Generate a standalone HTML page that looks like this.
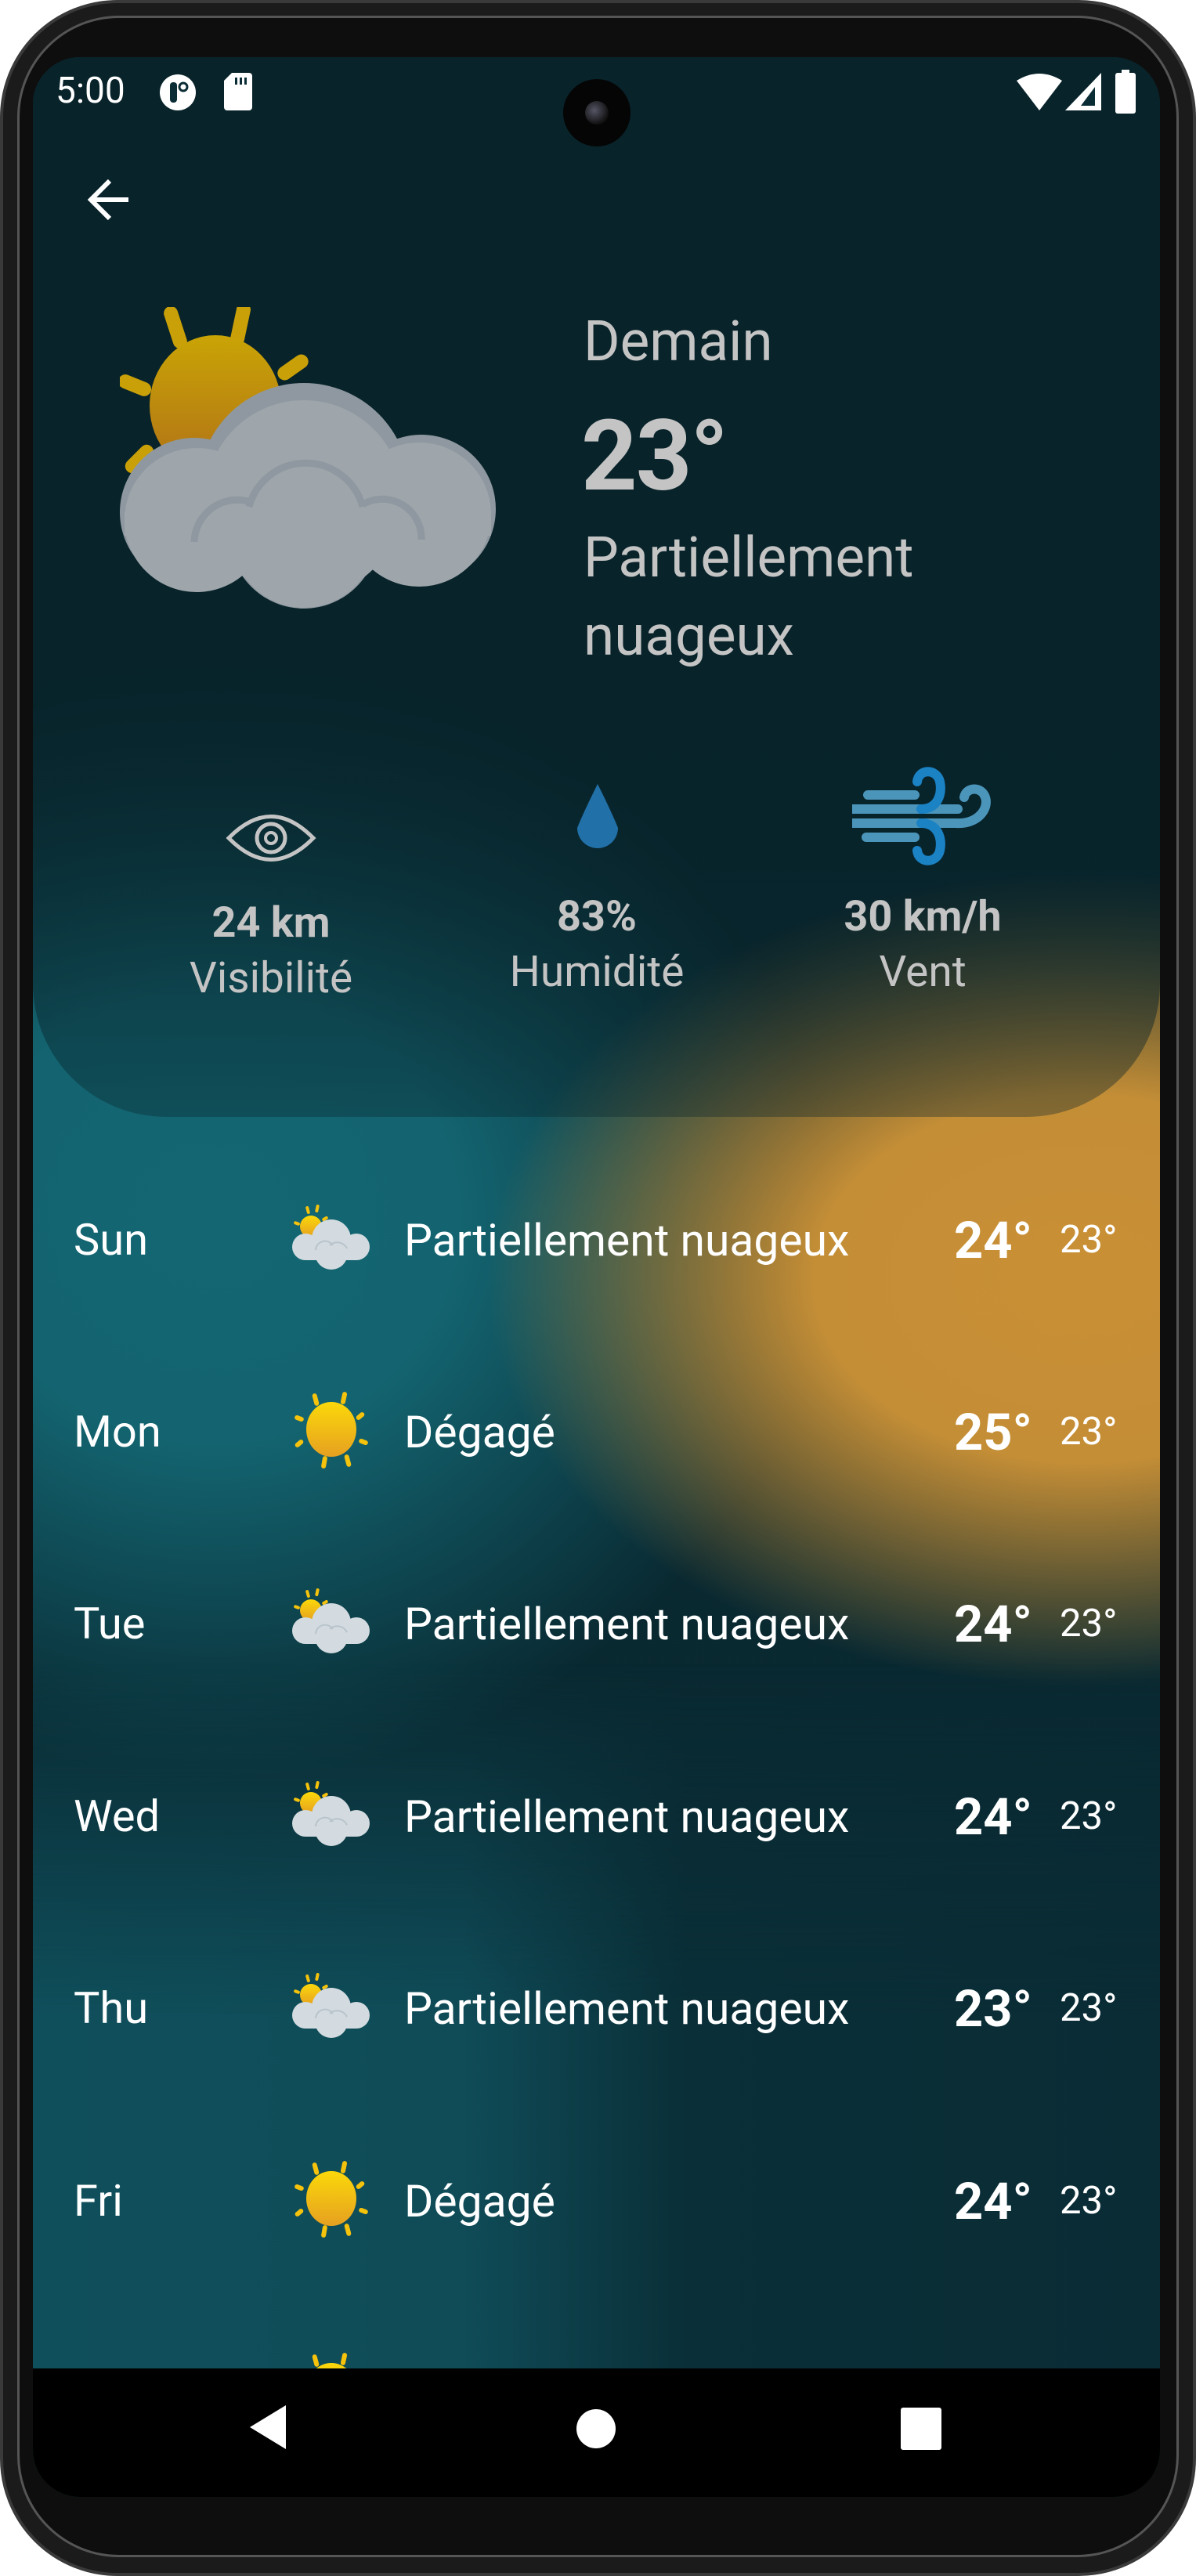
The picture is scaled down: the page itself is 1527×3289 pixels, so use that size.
<!DOCTYPE html>
<html><head><meta charset="utf-8"><style>
*{margin:0;padding:0;box-sizing:border-box}
body{width:1527px;height:3289px;background:#fff;position:relative;overflow:hidden;font-family:"Roboto","Liberation Sans",sans-serif}
.frame{position:absolute;left:0;top:0;width:1527px;height:3289px;border-radius:150px;background:#1b1b1b;border:4px solid #3a3a3a}
.bezel{position:absolute;left:22px;top:20px;width:1483px;height:3245px;border-radius:130px;background:#0e0e0e;border:3px solid #555}
.screen{position:absolute;left:42px;top:73px;width:1439px;height:3115px;border-radius:60px;overflow:hidden;background:#0a2c35}
.bg{position:absolute;inset:0;background:
radial-gradient(ellipse 760px 520px at 1340px 1560px,#c98f35 0%,#c48e36 45%,rgba(196,142,54,.55) 70%,rgba(196,142,54,0) 100%),
radial-gradient(ellipse 780px 720px at 230px 1480px,#136672 0%,#136470 40%,rgba(19,100,112,0) 100%),
linear-gradient(#08232a,#0a2c35)}
.low{position:absolute;left:0;top:2050px;width:1439px;height:1000px;background:linear-gradient(to right,#0f4f5b 0%,#0f4c58 38%,#0a2f38 58%,#0a2c35 100%);-webkit-mask-image:linear-gradient(to bottom,transparent 0,#000 450px);mask-image:linear-gradient(to bottom,transparent 0,#000 450px)}
.card{position:absolute;left:0;top:0;width:1439px;height:1353px;border-radius:0 0 170px 170px;background:linear-gradient(to bottom,#08232a 0%,#08232a 50%,rgba(8,35,42,.75) 70%,rgba(8,35,42,.35) 100%)}
.nav{position:absolute;left:0;top:2951px;width:1439px;height:164px;background:#000}
.t{position:absolute;white-space:nowrap}
.g{color:#c4c4c4}
.w{color:#fff}
.row{position:absolute;left:0;width:1439px;height:120px}
.row .d{position:absolute;left:52px;top:26px;font-size:56px;color:#fff}
.row .ds{position:absolute;left:474px;top:26px;font-size:57px;color:#fff}
.row .hi{position:absolute;left:1176px;top:22px;font-size:65px;font-weight:bold;color:#fff}
.row .lo{position:absolute;left:1311px;top:30px;font-size:49px;color:#fff}
.row svg{position:absolute;left:326px;top:6px}
</style></head><body>
<svg width="0" height="0" style="position:absolute">
<defs>
<linearGradient id="sg" x1="0" y1="0" x2="0" y2="1"><stop offset="0" stop-color="#fbd80a"/><stop offset="1" stop-color="#e6a020"/></linearGradient>
<linearGradient id="bsg" x1="0" y1="0" x2="0" y2="1"><stop offset="0" stop-color="#c9a405"/><stop offset="1" stop-color="#b07018"/></linearGradient>
<symbol id="sun" viewBox="0 0 100 100">
<g fill="#f5c20c"><rect x="27" y="4" width="6" height="16" rx="3" transform="rotate(-15 30 12)"/><rect x="63" y="2" width="6" height="16" rx="3" transform="rotate(12 66 10)"/><rect x="84" y="27" width="6" height="12" rx="3" transform="rotate(50 87 33)"/><rect x="88" y="60" width="6" height="12" rx="3" transform="rotate(-70 91 66)"/><rect x="68" y="82" width="6" height="16" rx="3" transform="rotate(-15 71 90)"/><rect x="38" y="84" width="6" height="16" rx="3" transform="rotate(10 41 92)"/><rect x="6" y="62" width="6" height="12" rx="3" transform="rotate(50 9 68)"/><rect x="6" y="30" width="6" height="12" rx="3" transform="rotate(-70 9 36)"/></g>
<ellipse cx="50" cy="50" rx="32" ry="35" fill="url(#sg)"/>
</symbol>
<symbol id="pc" viewBox="0 0 100 100">
<g fill="#f5c20c"><rect x="18" y="10" width="4" height="10" rx="2" transform="rotate(-15 20 15)"/><rect x="30" y="8" width="4" height="10" rx="2" transform="rotate(12 32 13)"/><rect x="40" y="22" width="4" height="8" rx="2" transform="rotate(60 42 26)"/><rect x="4" y="28" width="4" height="8" rx="2" transform="rotate(-70 6 32)"/></g>
<circle cx="24" cy="36" r="14" fill="url(#sg)"/>
<g fill="#d3dbe0"><circle cx="17" cy="62" r="17"/><circle cx="50" cy="52" r="25"/><circle cx="82" cy="62" r="17"/><circle cx="50" cy="70" r="21"/><rect x="17" y="56" width="65" height="23"/></g>
<path d="M30 66a12 12 0 0 1 22-6M48 60a14 14 0 0 1 22 4" stroke="#b8c3cb" stroke-width="2" fill="none"/>
</symbol>
</defs></svg>

<div class="frame"></div>
<div class="bezel"></div>
<div class="screen">
<div class="bg"></div>
<div class="low"></div>
<div class="card"></div>

<div class="t w" style="left:29px;top:16px;font-size:46px">5:00</div>
<svg style="position:absolute;left:160px;top:20px" width="50" height="50" viewBox="0 0 50 50"><circle cx="25" cy="25" r="23" fill="#fff"/><rect x="15" y="12" width="9" height="26" rx="4" fill="#0a2c35"/><circle cx="32" cy="18" r="5" fill="none" stroke="#0a2c35" stroke-width="3"/></svg>
<svg style="position:absolute;left:244px;top:20px" width="36" height="48" viewBox="0 0 36 48"><path d="M10 0H32a4 4 0 0 1 4 4V44a4 4 0 0 1-4 4H4a4 4 0 0 1-4-4V10Z" fill="#fff"/><rect x="14" y="6" width="3" height="9" fill="#0a2c35"/><rect x="20" y="6" width="3" height="9" fill="#0a2c35"/><rect x="26" y="6" width="3" height="9" fill="#0a2c35"/></svg>
<div style="position:absolute;left:677px;top:28px;width:86px;height:86px;border-radius:50%;background:#050505"><div style="position:absolute;left:28px;top:28px;width:30px;height:30px;border-radius:50%;background:radial-gradient(circle at 40% 40%,#556,#111 70%)"></div></div>
<svg style="position:absolute;left:1256px;top:20px" width="58" height="50" viewBox="0 0 58 50"><path d="M0 10Q29-8 58 10L29 48Z" fill="#fff"/></svg>
<svg style="position:absolute;left:1318px;top:20px" width="48" height="50" viewBox="0 0 48 50"><path d="M46 0V48H0Z" fill="#fff"/><path d="M38 18V42H20Z" fill="#0a2c35"/></svg>
<svg style="position:absolute;left:1382px;top:16px" width="26" height="56" viewBox="0 0 26 56"><rect x="8" y="0" width="10" height="6" fill="#fff"/><rect x="0" y="4" width="26" height="52" rx="3" fill="#fff"/></svg>

<svg style="position:absolute;left:68px;top:152px" width="60" height="60" viewBox="0 0 60 60"><path d="M54 30H8M30 6L6 30L30 54" stroke="#fff" stroke-width="6" fill="none"/></svg>

<svg style="position:absolute;left:111px;top:319px" width="480" height="390" viewBox="0 0 480 390">
<g fill="#c9a008"><rect x="62" y="-2" width="18" height="56" rx="9" transform="rotate(-18 71 26)"/><rect x="145" y="-6" width="18" height="56" rx="9" transform="rotate(12 154 22)"/><rect x="212" y="55" width="18" height="44" rx="9" transform="rotate(55 221 77)"/><rect x="10" y="78" width="18" height="44" rx="9" transform="rotate(-68 19 100)"/><rect x="16" y="172" width="18" height="44" rx="9" transform="rotate(45 25 194)"/></g>
<ellipse cx="122" cy="126" rx="84" ry="90" fill="url(#bsg)"/>
<g fill="#8f98a0"><circle cx="95" cy="262" r="95"/><circle cx="235" cy="232" r="135"/><circle cx="385" cy="258" r="95"/><circle cx="235" cy="290" r="95"/></g>
<g fill="#9ea6ab"><circle cx="98" cy="272" r="92"/><circle cx="235" cy="245" r="126"/><circle cx="382" cy="265" r="92"/><circle cx="235" cy="292" r="92"/><rect x="6" y="262" width="468" height="30"/></g>
<path d="M95 300a55 55 0 0 1 75-50M165 255a75 75 0 0 1 145 0M310 252a50 50 0 0 1 75 45" stroke="#8f98a0" stroke-width="9" fill="none"/>
</svg>

<div class="t g" style="left:703px;top:322px;font-size:71px">Demain</div>
<div class="t g" style="left:700px;top:436px;font-size:125px;font-weight:bold;letter-spacing:-2px">23°</div>
<div class="t g" style="left:703px;top:598px;font-size:71px">Partiellement</div>
<div class="t g" style="left:703px;top:698px;font-size:71px">nuageux</div>

<svg style="position:absolute;left:246px;top:962px" width="116" height="70" viewBox="0 0 116 70"><path d="M4 35Q58-20 112 35Q58 90 4 35Z" stroke="#c4c4c4" stroke-width="5" fill="none"/><circle cx="58" cy="35" r="18" stroke="#c4c4c4" stroke-width="5" fill="none"/><circle cx="58" cy="35" r="7" stroke="#c4c4c4" stroke-width="4" fill="none"/></svg>
<div class="t g" style="left:0;width:608px;text-align:center;top:1074px;font-size:54px;font-weight:bold">24 km</div>
<div class="t g" style="left:0;width:608px;text-align:center;top:1144px;font-size:55px">Visibilité</div>

<svg style="position:absolute;left:689px;top:928px" width="64" height="88" viewBox="0 0 64 88"><path d="M32 0Q50 36 58 56A26 26 0 0 1 6 56Q14 36 32 0Z" fill="#2170a8"/></svg>
<div class="t g" style="left:416px;width:608px;text-align:center;top:1066px;font-size:54px;font-weight:bold">83%</div>
<div class="t g" style="left:416px;width:608px;text-align:center;top:1136px;font-size:55px">Humidité</div>

<svg style="position:absolute;left:1046px;top:900px" width="180" height="140" viewBox="0 0 180 140"><g stroke-width="12" fill="none" stroke-linecap="round"><path d="M20 42H80M0 60H135M0 78H135M18 96H80" stroke="#4b95bb"/><path d="M88 60C110 60 115 40 112 25C108 8 85 8 83 25" stroke="#1b82c4"/><path d="M132 78C160 80 175 60 170 45C165 30 145 32 143 45" stroke="#4b95bb"/><path d="M88 78C110 78 115 98 112 113C108 130 85 130 83 113" stroke="#1b82c4"/></g></svg>
<div class="t g" style="left:832px;width:608px;text-align:center;top:1066px;font-size:54px;font-weight:bold">30 km/h</div>
<div class="t g" style="left:832px;width:608px;text-align:center;top:1136px;font-size:55px">Vent</div>

<div class="row" style="top:1451px"><div class="d">Sun</div><svg width="110" height="100"><use href="#pc"/></svg><div class="ds">Partiellement nuageux</div><div class="hi">24°</div><div class="lo">23°</div></div>
<div class="row" style="top:1696px"><div class="d">Mon</div><svg width="110" height="100"><use href="#sun"/></svg><div class="ds">Dégagé</div><div class="hi">25°</div><div class="lo">23°</div></div>
<div class="row" style="top:1941px"><div class="d">Tue</div><svg width="110" height="100"><use href="#pc"/></svg><div class="ds">Partiellement nuageux</div><div class="hi">24°</div><div class="lo">23°</div></div>
<div class="row" style="top:2187px"><div class="d">Wed</div><svg width="110" height="100"><use href="#pc"/></svg><div class="ds">Partiellement nuageux</div><div class="hi">24°</div><div class="lo">23°</div></div>
<div class="row" style="top:2432px"><div class="d">Thu</div><svg width="110" height="100"><use href="#pc"/></svg><div class="ds">Partiellement nuageux</div><div class="hi">23°</div><div class="lo">23°</div></div>
<div class="row" style="top:2678px"><div class="d">Fri</div><svg width="110" height="100"><use href="#sun"/></svg><div class="ds">Dégagé</div><div class="hi">24°</div><div class="lo">23°</div></div>
<div class="row" style="top:2923px"><svg width="110" height="100"><use href="#sun"/></svg></div>

<div class="nav">
<svg style="position:absolute;left:273px;top:45px" width="56" height="60" viewBox="0 0 56 60"><path d="M50 2V58L4 30Z" fill="#fff"/></svg>
<div style="position:absolute;left:694px;top:52px;width:50px;height:50px;border-radius:50%;background:#fff"></div>
<div style="position:absolute;left:1108px;top:50px;width:52px;height:54px;border-radius:3px;background:#fff"></div>
</div>
</div>
</body></html>
